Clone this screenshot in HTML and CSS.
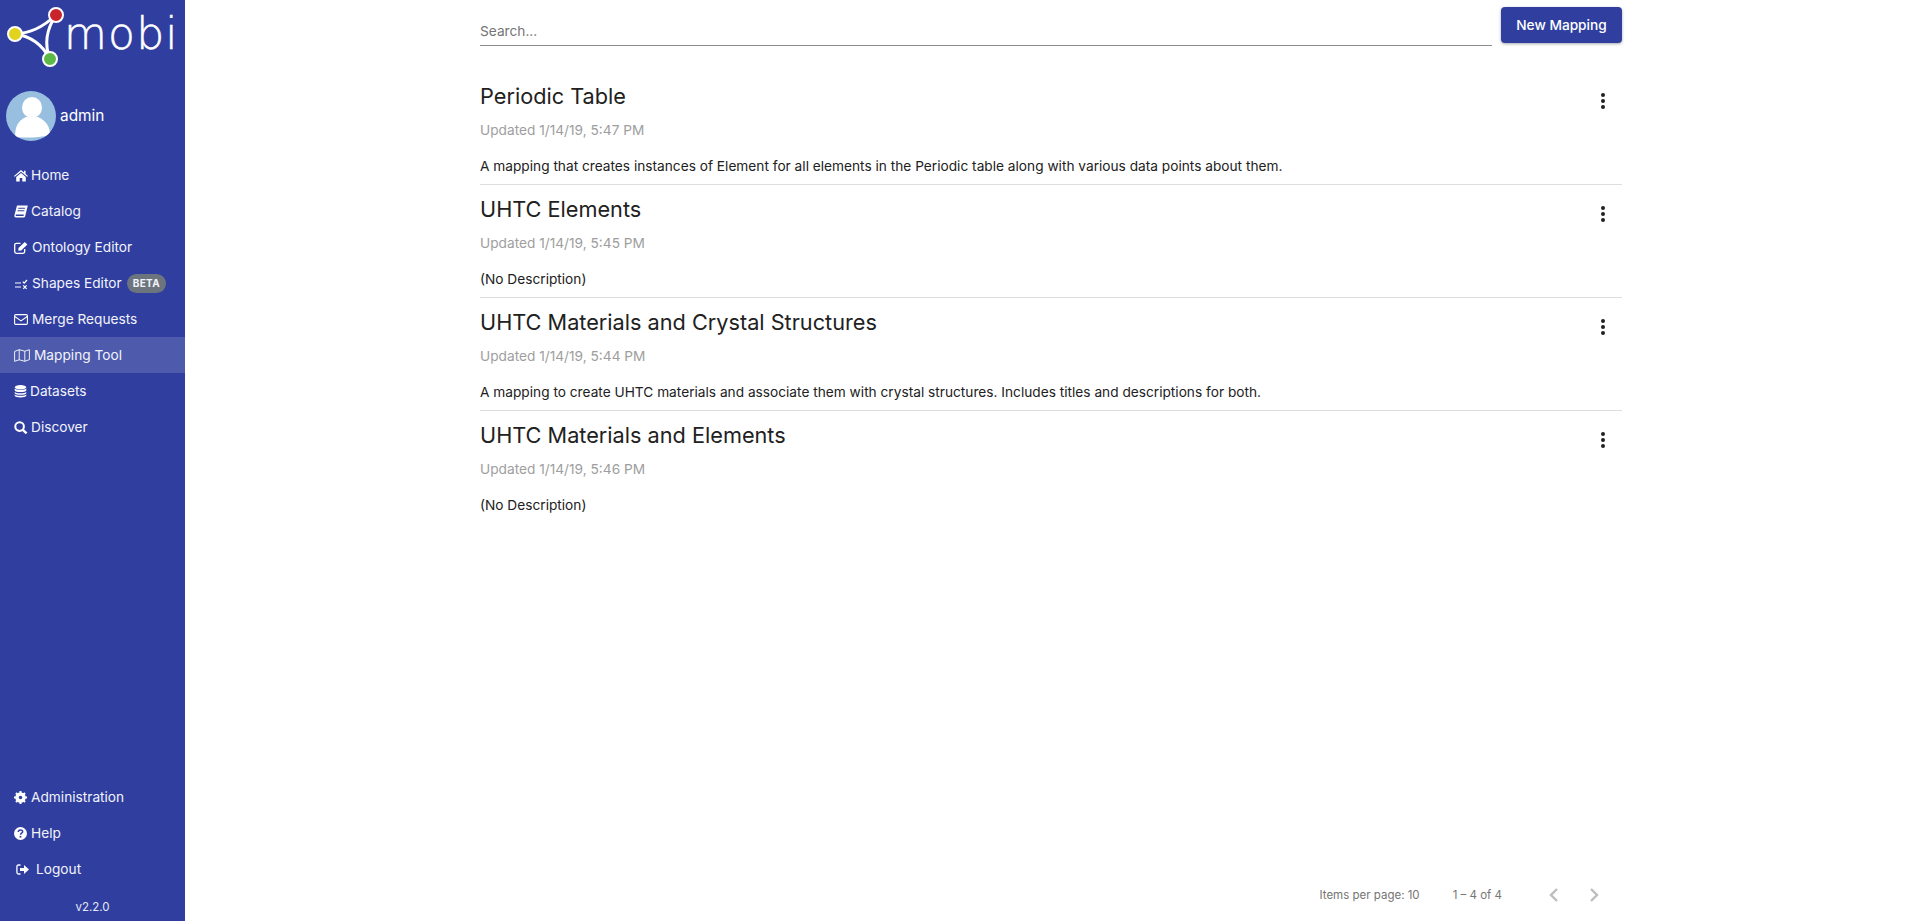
FILE: index.html
```html
<!DOCTYPE html>
<html lang="en">
<head>
    <meta charset="UTF-8">
    <meta name="viewport" content="width=device-width, initial-scale=1.0">
    <title>Mobi - Mapping Tool</title>
    <link rel="stylesheet" href="styles.css">
</head>
<body>
    <div class="sidebar">
        <div class="logo">
            <svg class="logo-mark" width="64" height="68" viewBox="0 0 64 68">
                <path d="M15 34 C30 33 42 28 56 15 C46 30 44 44 50 59 C42 44 30 36 15 34 Z" fill="none" stroke="#fff" stroke-width="3"/>
                <circle cx="15" cy="34" r="7" fill="#e2d31f" stroke="#fff" stroke-width="2"/>
                <circle cx="56" cy="15" r="7" fill="#c9242b" stroke="#fff" stroke-width="2"/>
                <circle cx="50" cy="59" r="7" fill="#5cb947" stroke="#fff" stroke-width="2"/>
            </svg>
            <span class="logo-text">mobi</span>
        </div>
        <div class="user">
            <svg class="avatar" width="50" height="50" viewBox="0 0 50 50">
                <defs><clipPath id="avatarClip"><circle cx="25" cy="25" r="25"/></clipPath></defs>
                <circle cx="25" cy="25" r="25" fill="#98bfe0"/>
                <g clip-path="url(#avatarClip)" fill="#fff">
                    <ellipse cx="26" cy="16.5" rx="10" ry="10.5"/>
                    <path d="M9 46 C9 35 12 30 20 26 L32 26 C40 30 44 35 44 44 C32 47 20 47 9 46 Z"/>
                </g>
            </svg>
            <span class="user-name">admin</span>
        </div>

        <ul class="nav">
            <li><a href="#"><svg class="ico" viewBox="0 0 14 13"><path d="M7 1 L10 3.5 V1.7 H11.6 V4.9 L14 6.9 L13.2 7.7 L7 2.7 L0.8 7.7 L0 6.9 Z M2.2 7.9 L7 4 L11.8 7.9 V12.5 H8.3 V9.1 H5.7 V12.5 H2.2 Z" fill="#fff"/></svg>Home</a></li>
            <li><a href="#"><svg class="ico" viewBox="0 0 14 13"><path d="M3 0.5 H13.8 L11.2 11 C11 12 10.4 12.5 9.2 12.5 H1.8 C0.6 12.5 0 11.4 0.5 10 Z M4.4 2.8 L4.1 3.8 H10.9 L11.2 2.8 Z M3.7 5.2 L3.4 6.2 H10.2 L10.5 5.2 Z M2 9.6 C1.5 10 1.5 11 2.2 11 H9.5 L9.9 9.6 Z" fill="#fff" fill-rule="evenodd"/></svg>Catalog</a></li>
            <li class="gap-lg"><a href="#"><svg class="ico" viewBox="0 0 14 13"><path d="M6.5 2.3 H2.4 C1.4 2.3 0.7 3 0.7 4 V10.6 C0.7 11.6 1.4 12.3 2.4 12.3 H9 C10 12.3 10.7 11.6 10.7 10.6 V8" fill="none" stroke="#fff" stroke-width="1.3"/><path d="M4.5 7 L10.8 1 L13.4 3.5 L7.2 9.5 L4.3 9.8 Z" fill="#fff"/></svg>Ontology Editor</a></li>
            <li class="gap-lg"><a href="#"><svg class="ico" viewBox="0 0 14 13"><path d="M1 6 H7 M1 10 H7" stroke="#fff" stroke-width="1.2"/><path d="M8.8 4.6 L10.2 6.2 L13 3 M9.2 8.4 L12.6 11.8 M12.6 8.4 L9.2 11.8" stroke="#fff" stroke-width="1.2" fill="none"/></svg>Shapes Editor<span class="badge">BETA</span></a></li>
            <li class="gap-lg"><a href="#"><svg class="ico" viewBox="0 0 14 13"><rect x="0.6" y="1.6" width="12.8" height="9.8" rx="1.2" fill="none" stroke="#fff" stroke-width="1.1"/><path d="M0.8 3.5 L7 7.9 L13.2 3.5" fill="none" stroke="#fff" stroke-width="1.1"/></svg>Merge Requests</a></li>
            <li class="active"><a href="#"><svg class="ico ico-map" viewBox="0 0 16 13"><path d="M0.6 2.4 L5.2 0.7 L10.8 2.2 L15.4 0.7 V10.6 L10.8 12.3 L5.2 10.8 L0.6 12.3 Z M5.2 0.7 V10.8 M10.8 2.2 V12.3" fill="none" stroke="#fff" stroke-width="0.9"/></svg>Mapping Tool</a></li>
            <li><a href="#"><svg class="ico ico-narrow" viewBox="0 0 12 13"><ellipse cx="6" cy="2.2" rx="5.8" ry="2.2" fill="#fff"/><path d="M0.2 3.6 C1 5.4 11 5.4 11.8 3.6 V5.6 C11 7.6 1 7.6 0.2 5.6 Z M0.2 7 C1 8.8 11 8.8 11.8 7 V8.2 C11 10.2 1 10.2 0.2 8.2 Z M0.2 9.4 C1 11.2 11 11.2 11.8 9.4 V10.8 C11 13 1 13 0.2 10.8 Z" fill="#fff"/></svg>Datasets</a></li>
            <li><a href="#"><svg class="ico" viewBox="0 0 14 13"><circle cx="5.6" cy="5.6" r="4.3" fill="none" stroke="#fff" stroke-width="2"/><path d="M8.8 8.8 L12.6 12.4" stroke="#fff" stroke-width="2.4"/></svg>Discover</a></li>
        </ul>

        <ul class="nav nav-bottom">
            <li><a href="#"><svg class="ico ico-round" viewBox="0 0 12 12"><circle cx="6" cy="6" r="3.6" fill="none" stroke="#fff" stroke-width="2.4"/><path d="M6 0 V12 M0 6 H12 M1.8 1.8 L10.2 10.2 M10.2 1.8 L1.8 10.2" stroke="#fff" stroke-width="1.8"/><circle cx="6" cy="6" r="1.6" fill="#303f9f"/></svg>Administration</a></li>
            <li><a href="#"><svg class="ico ico-round" viewBox="0 0 12 12"><circle cx="6" cy="6" r="6" fill="#fff"/><path d="M4 4.6 C4 2.2 8 2.2 8 4.4 C8 5.8 6 5.6 6 7.2" fill="none" stroke="#303f9f" stroke-width="1.4"/><rect x="5.2" y="8.2" width="1.6" height="1.6" fill="#303f9f"/></svg>Help</a></li>
            <li class="logout"><a href="#"><svg class="ico" viewBox="0 0 14 12"><path d="M4.5 1.5 H2.5 C1.4 1.5 0.9 2.2 0.9 3 V9 C0.9 9.8 1.4 10.5 2.5 10.5 H4.5" fill="none" stroke="#fff" stroke-width="1.3"/><path d="M4 4.4 H8 V1.6 L13 6 L8 10.4 V7.6 H4 Z" fill="#fff"/></svg>Logout</a></li>
        </ul>
        <div class="version">v2.2.0</div>
    </div>

    <div class="main">
        <div class="content">
            <div class="toolbar">
                <div class="search">Search...</div>
                <button class="btn-new">New Mapping</button>
            </div>

            <div class="item">
                <div class="item-head">
                    <h3>Periodic Table</h3>
                    <div class="dots"><i></i><i></i><i></i></div>
                </div>
                <p class="updated">Updated 1/14/19, 5:47 PM</p>
                <p class="desc">A mapping that creates instances of Element for all elements in the Periodic table along with various data points about them.</p>
            </div>
            <div class="item">
                <div class="item-head">
                    <h3>UHTC Elements</h3>
                    <div class="dots"><i></i><i></i><i></i></div>
                </div>
                <p class="updated">Updated 1/14/19, 5:45 PM</p>
                <p class="desc">(No Description)</p>
            </div>
            <div class="item">
                <div class="item-head">
                    <h3>UHTC Materials and Crystal Structures</h3>
                    <div class="dots"><i></i><i></i><i></i></div>
                </div>
                <p class="updated">Updated 1/14/19, 5:44 PM</p>
                <p class="desc">A mapping to create UHTC materials and associate them with crystal structures. Includes titles and descriptions for both.</p>
            </div>
            <div class="item">
                <div class="item-head">
                    <h3>UHTC Materials and Elements</h3>
                    <div class="dots"><i></i><i></i><i></i></div>
                </div>
                <p class="updated">Updated 1/14/19, 5:46 PM</p>
                <p class="desc">(No Description)</p>
            </div>

            <div class="paginator">
                <span class="per-page">Items per page: 10</span>
                <span class="range">1 – 4 of 4</span>
                <svg class="chev" width="14" height="16" viewBox="0 0 14 16"><path d="M10 2 L4 8 L10 14" fill="none" stroke="#bdbdbd" stroke-width="2.4"/></svg>
                <svg class="chev" width="14" height="16" viewBox="0 0 14 16"><path d="M4 2 L10 8 L4 14" fill="none" stroke="#bdbdbd" stroke-width="2.4"/></svg>
            </div>
        </div>
    </div>
</body>
</html>
```

FILE: styles.css
```css
* {
    box-sizing: border-box;
}
html, body {
    height: 100%;
}
body {
    margin: 0;
    display: flex;
    font-family: 'Inter', 'Liberation Sans', sans-serif;
    font-size: 13.7px;
    color: #212121;
    background-color: #fff;
    overflow: hidden;
}
.sidebar {
    width: 185px;
    flex-shrink: 0;
    height: 100%;
    display: flex;
    flex-direction: column;
    background-color: #303f9f;
    color: #fff;
}
.logo {
    height: 70px;
    display: flex;
    align-items: flex-start;
}
.logo-mark {
    flex-shrink: 0;
}
.logo-text {
    font-family: 'DejaVu Sans', sans-serif;
    font-weight: 200;
    font-size: 44px;
    line-height: 50px;
    letter-spacing: 1.2px;
    -webkit-text-stroke: 0.5px #fff;
    margin-top: 9px;
}
.user {
    display: flex;
    align-items: center;
    gap: 4px;
    padding-left: 6px;
    margin-top: 21px;
    font-size: 15.4px;
    height: 50px;
}
.avatar {
    flex-shrink: 0;
}
.user-name {
    margin-bottom: 2px;
}
.nav {
    list-style: none;
    margin: 16px 0 0;
    padding: 0;
}
.nav li {
    height: 36px;
}
.nav a {
    display: flex;
    align-items: center;
    height: 100%;
    padding-left: 14px;
    color: #f2f3fa;
    text-decoration: none;
}
.ico {
    width: 14px;
    height: 13px;
    flex-shrink: 0;
    margin-right: 3px;
}
.ico-narrow {
    width: 13px;
    margin-right: 3px;
}
.ico-map {
    width: 16px;
    margin-right: 4px;
}
.ico-round {
    width: 13px;
    margin-right: 4px;
}
.gap-lg .ico {
    margin-right: 4px;
}
.active {
    background-color: rgba(255,255,255,0.15);
}
.badge {
    margin-left: 5px;
    padding: 0 6px;
    height: 19px;
    line-height: 19px;
    border-radius: 10px;
    background-color: #6c757d;
    font-size: 10px;
    font-weight: 700;
    letter-spacing: 0.4px;
}
.nav-bottom {
    margin-top: auto;
}
.logout a {
    padding-left: 16px;
}
.logout .ico {
    margin-right: 6px;
}
.version {
    height: 34px;
    padding-top: 13px;
    text-align: center;
    font-size: 11.5px;
    color: #e6e8f5;
}
.main {
    flex: 1;
    height: 100%;
}
.content {
    width: 1142px;
    height: 100%;
    margin-left: 295px;
    display: flex;
    flex-direction: column;
}
.toolbar {
    display: flex;
    align-items: flex-start;
    gap: 9px;
    padding-top: 7px;
    height: 72px;
    flex-shrink: 0;
}
.search {
    flex: 1;
    height: 39px;
    padding-top: 16px;
    border-bottom: 1px solid #8c8c8c;
    line-height: 17px;
    color: #757575;
}
.btn-new {
    width: 121px;
    height: 36px;
    border: none;
    border-radius: 4px;
    background-color: #303f9f;
    color: #fff;
    font-family: inherit;
    font-size: 13.7px;
    font-weight: 500;
    box-shadow: 0 1px 3px rgba(0,0,0,0.35);
}
.item {
    height: 113px;
    border-bottom: 1px solid #dedede;
}
.item:nth-last-child(2) {
    border-bottom: none;
}
.item-head {
    display: flex;
    justify-content: space-between;
    height: 44px;
    padding-top: 10px;
}
h3 {
    margin: 0;
    font-size: 21.7px;
    line-height: 29px;
    font-weight: 400;
    color: #212121;
}
.dots {
    width: 4px;
    margin: 11px 17px 0 0;
    display: flex;
    flex-direction: column;
    gap: 2px;
}
.dots i {
    width: 4px;
    height: 4px;
    border-radius: 50%;
    background-color: #212121;
}
.updated {
    margin: 6px 0 0;
    line-height: 17px;
    color: #9e9e9e;
}
.desc {
    margin: 19px 0 0;
    line-height: 17px;
    color: #212121;
}
.paginator {
    margin-top: auto;
    height: 52px;
    display: flex;
    align-items: center;
    justify-content: flex-end;
    padding-right: 21px;
    font-size: 11.5px;
    color: #757575;
}
.per-page {
    margin-right: 33px;
}
.range {
    margin-right: 45px;
}
.chev + .chev {
    margin-left: 26px;
}
```
